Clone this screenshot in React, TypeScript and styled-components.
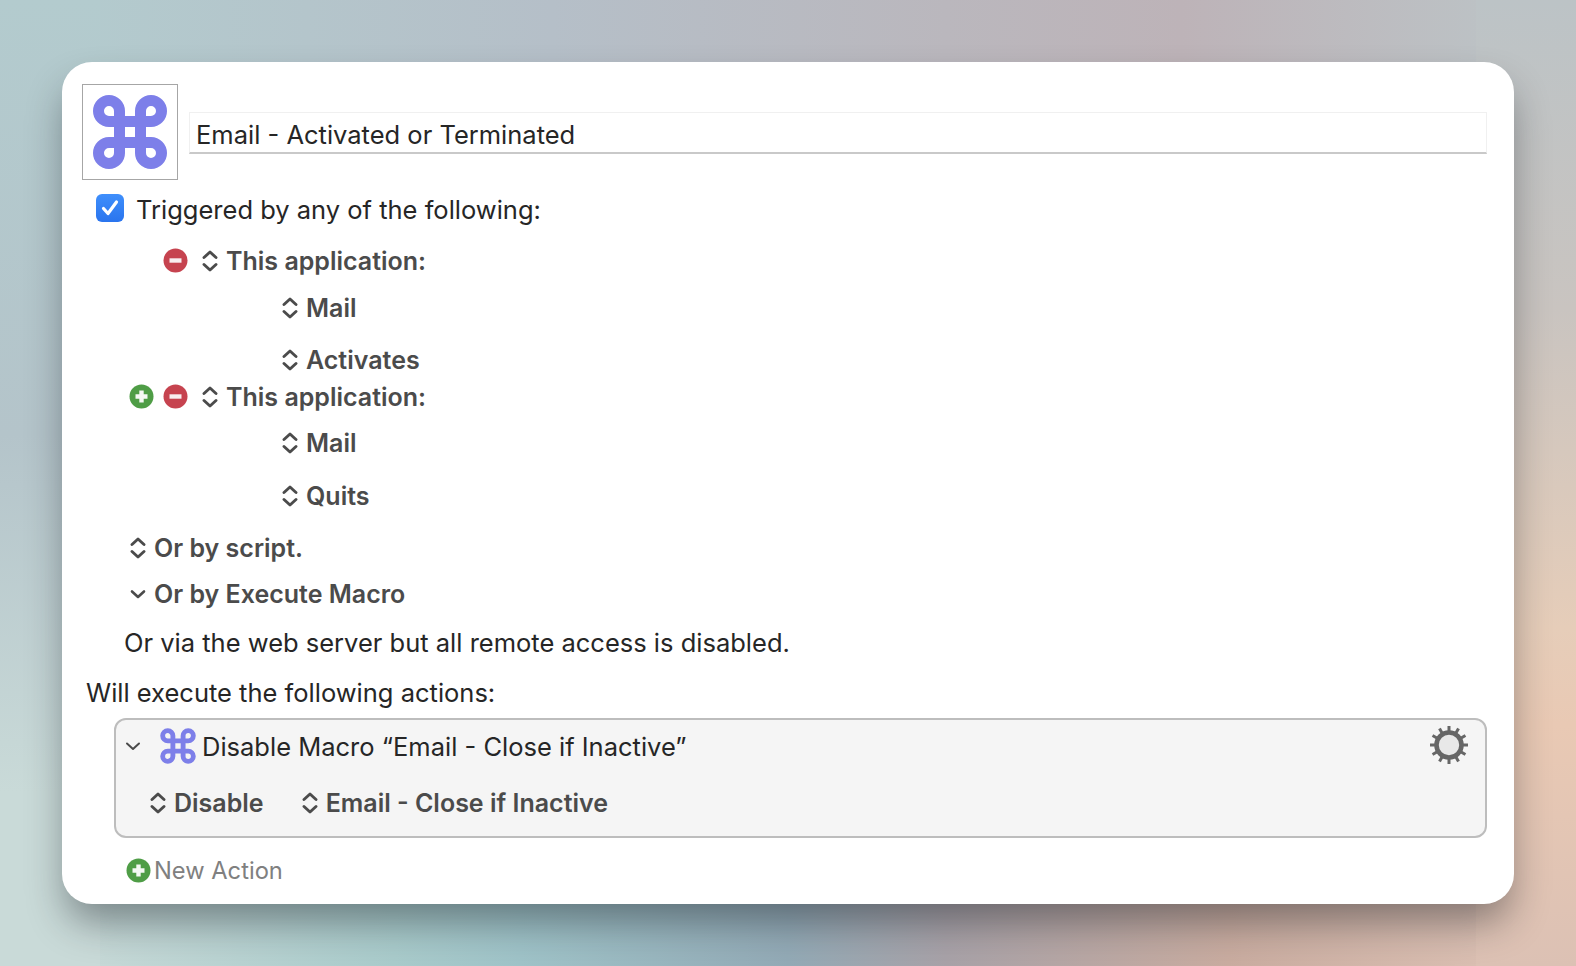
import React from 'react';
import styled, { createGlobalStyle } from 'styled-components';

const GlobalStyle = createGlobalStyle`
  html, body {
    margin: 0;
    padding: 0;
    height: 100%;
    overflow: hidden;
  }
  body {
    font-family: Inter, "Noto Sans", "Liberation Sans", sans-serif;
  }
`;

const COMMAND_PATH =
  'M47.5 16V58a10.5 10.5 0 1 0 10.5-10.5H16a10.5 10.5 0 1 0 10.5 10.5V16a10.5 10.5 0 1 0-10.5 10.5H58a10.5 10.5 0 1 0-10.5-10.5';

const CommandIcon: React.FC<{ size: number; weight: number }> = ({ size, weight }) => (
  <svg width={size} height={size} viewBox="0 0 74 74" fill="none">
    <path d={COMMAND_PATH} stroke="#7d7fe9" strokeWidth={weight} strokeLinejoin="round" />
  </svg>
);

const Stepper: React.FC = () => (
  <svg width="16" height="24" viewBox="0 0 16 24" fill="none">
    <path
      d="M2 8.5L8 3l6 5.5M2 15.5L8 21l6-5.5"
      stroke="#4b4b4b"
      strokeWidth="2.9"
      strokeLinecap="round"
      strokeLinejoin="round"
    />
  </svg>
);

const Chevron: React.FC<{ width: number; weight: number }> = ({ width, weight }) => (
  <svg width={width} height="24" viewBox="0 0 16 24" fill="none">
    <path
      d="M2 9.5l6 5.5 6-5.5"
      stroke="#4b4b4b"
      strokeWidth={weight}
      strokeLinecap="round"
      strokeLinejoin="round"
    />
  </svg>
);

const RoundButton: React.FC<{ kind: 'add' | 'remove' }> = ({ kind }) => (
  <svg width="25" height="25" viewBox="0 0 25 25">
    <circle cx="12.5" cy="12.5" r="12" fill={kind === 'add' ? '#4f9d46' : '#c6434f'} />
    {kind === 'add' ? (
      <path d="M12.5 6.5v12M6.5 12.5h12" stroke="#f4f8f3" strokeWidth="4.4" />
    ) : (
      <path d="M6.5 12.5h12" stroke="#f8eef0" strokeWidth="4.4" />
    )}
  </svg>
);

const GearIcon: React.FC = () => {
  const teeth = Array.from({ length: 12 }, (_, i) => i * 30);
  return (
    <svg width="40" height="40" viewBox="0 0 40 40">
      {teeth.map((deg) => (
        <rect key={deg} x="18.5" y="1" width="3" height="8" fill="#666" transform={`rotate(${deg} 20 20)`} />
      ))}
      <circle cx="20" cy="20" r="12.5" fill="#e8e8e8" stroke="#666" strokeWidth="4.6" />
    </svg>
  );
};

const Page = styled.div`
  box-sizing: border-box;
  width: 1576px;
  height: 966px;
  padding: 62px;
  background:
    linear-gradient(180deg, #b3cbce 0%, #b4c4ca 45%, #c9dad8 82%, #c9dad8 100%) 0 0 / 100px 100% no-repeat,
    linear-gradient(180deg, #bcc3c6 0%, #c9c4c0 32%, #e6cdb9 65%, #e9c9b4 75%, #dcc1b4 100%) 100% 0 / 100px 100% no-repeat,
    linear-gradient(90deg, #c9dad8 4%, #a9cbcb 25%, #9fc3c8 33%, #93aab6 50%, #a8a2a8 60%, #c9aca0 78%, #dcc1b4 96%) 0 100% / 100% 100px no-repeat,
    linear-gradient(90deg, #b3cbce 4%, #b5bfc8 35%, #bab7bd 60%, #bdb3b8 75%, #bcc3c6 96%) 0 0 / 100% 100px no-repeat;
`;

const Window = styled.div`
  box-sizing: border-box;
  width: 1452px;
  height: 842px;
  padding: 22px 27px 0 20px;
  background: #fff;
  border-radius: 30px;
  box-shadow: 0 22px 38px -4px rgba(20, 25, 30, 0.42);
  color: #262626;
`;

const Header = styled.div`
  display: flex;
  align-items: flex-start;
  gap: 11px;
`;

const IconWell = styled.div`
  box-sizing: border-box;
  flex: none;
  display: flex;
  align-items: center;
  justify-content: center;
  width: 96px;
  height: 96px;
  border: 1px solid #a6a6a6;
`;

const TitleField = styled.div`
  box-sizing: border-box;
  flex: 1;
  height: 42px;
  margin-top: 28px;
  padding: 0 6px;
  line-height: 44px;
  font-size: 25.5px;
  color: #262626;
  border: 1px solid #f0f0f0;
  border-bottom: 2px solid #c9c9c9;
`;

const Row = styled.div<{ $top: number; $indent: number }>`
  display: flex;
  align-items: center;
  height: 32px;
  margin-top: ${(p) => p.$top}px;
  margin-left: ${(p) => p.$indent}px;
`;

const Checkbox = styled.div`
  flex: none;
  display: flex;
  align-items: center;
  justify-content: center;
  width: 28px;
  height: 28px;
  margin: 0 12px 2px 0;
  border-radius: 6px;
  background: linear-gradient(#3f8ffc, #2a74ee);
`;

const Plain = styled.span`
  font-size: 25.5px;
  color: #262626;
  white-space: nowrap;
`;

const Popup = styled.span`
  margin-left: 8px;
  font-size: 25px;
  font-weight: 600;
  color: #4b4b4b;
  white-space: nowrap;
`;

const ButtonSlot = styled.span<{ $width: number }>`
  display: flex;
  width: ${(p) => p.$width}px;
  height: 25px;
  margin-bottom: 2px;
`;

const ActionCard = styled.div`
  box-sizing: border-box;
  height: 120px;
  margin: 10px 0 0 32px;
  padding-top: 2px;
  background: #f5f5f5;
  border: 2px solid #bdbdbd;
  border-radius: 12px;
`;

const ActionHead = styled.div`
  display: flex;
  align-items: center;
  height: 48px;
  padding: 0 16px 0 9px;
`;

const ActionIcon = styled.span`
  display: flex;
  margin: 0 6px 0 19px;
`;

const ActionTitle = styled.span`
  flex: 1;
  font-size: 25.5px;
  color: #262626;
  white-space: nowrap;
`;

const GearSlot = styled.span`
  display: flex;
  margin-bottom: 2px;
`;

const ActionOptions = styled.div`
  display: flex;
  align-items: center;
  gap: 38px;
  height: 36px;
  margin-top: 15px;
  padding-left: 34px;
`;

const Option = styled.span`
  display: flex;
  align-items: center;
`;

const NewAction = styled.span`
  margin-left: 3px;
  font-size: 23.7px;
  color: #808080;
  white-space: nowrap;
`;

const App: React.FC = () => (
  <Page>
    <GlobalStyle />
    <Window>
      <Header>
        <IconWell>
          <CommandIcon size={74} weight={11} />
        </IconWell>
        <TitleField>Email - Activated or Terminated</TitleField>
      </Header>

      <Row $top={13} $indent={14}>
        <Checkbox>
          <svg width="20" height="20" viewBox="0 0 20 20" fill="none">
            <path d="M3.5 10.5l4.5 5L16.5 4" stroke="#fff" strokeWidth="3.2" strokeLinecap="round" strokeLinejoin="round" />
          </svg>
        </Checkbox>
        <Plain>Triggered by any of the following:</Plain>
      </Row>

      <Row $top={20} $indent={81}>
        <ButtonSlot $width={39}><RoundButton kind="remove" /></ButtonSlot>
        <Stepper />
        <Popup>This application:</Popup>
      </Row>
      <Row $top={15} $indent={200}>
        <Stepper />
        <Popup>Mail</Popup>
      </Row>
      <Row $top={20} $indent={200}>
        <Stepper />
        <Popup>Activates</Popup>
      </Row>
      <Row $top={5} $indent={47}>
        <ButtonSlot $width={34}><RoundButton kind="add" /></ButtonSlot>
        <ButtonSlot $width={39}><RoundButton kind="remove" /></ButtonSlot>
        <Stepper />
        <Popup>This application:</Popup>
      </Row>
      <Row $top={14} $indent={200}>
        <Stepper />
        <Popup>Mail</Popup>
      </Row>
      <Row $top={21} $indent={200}>
        <Stepper />
        <Popup>Quits</Popup>
      </Row>
      <Row $top={20} $indent={48}>
        <Stepper />
        <Popup>Or by script.</Popup>
      </Row>
      <Row $top={14} $indent={48}>
        <Chevron width={16} weight={2.6} />
        <Popup>Or by Execute Macro</Popup>
      </Row>
      <Row $top={16} $indent={42}>
        <Plain>Or via the web server but all remote access is disabled.</Plain>
      </Row>
      <Row $top={18} $indent={4}>
        <Plain>Will execute the following actions:</Plain>
      </Row>

      <ActionCard>
        <ActionHead>
          <Chevron width={16} weight={2} />
          <ActionIcon>
            <CommandIcon size={36} weight={10} />
          </ActionIcon>
          <ActionTitle>Disable Macro “Email - Close if Inactive”</ActionTitle>
          <GearSlot>
            <GearIcon />
          </GearSlot>
        </ActionHead>
        <ActionOptions>
          <Option>
            <Stepper />
            <Popup>Disable</Popup>
          </Option>
          <Option>
            <Stepper />
            <Popup>Email - Close if Inactive</Popup>
          </Option>
        </ActionOptions>
      </ActionCard>

      <Row $top={16} $indent={44}>
        <RoundButton kind="add" />
        <NewAction>New Action</NewAction>
      </Row>
    </Window>
  </Page>
);

export default App;
